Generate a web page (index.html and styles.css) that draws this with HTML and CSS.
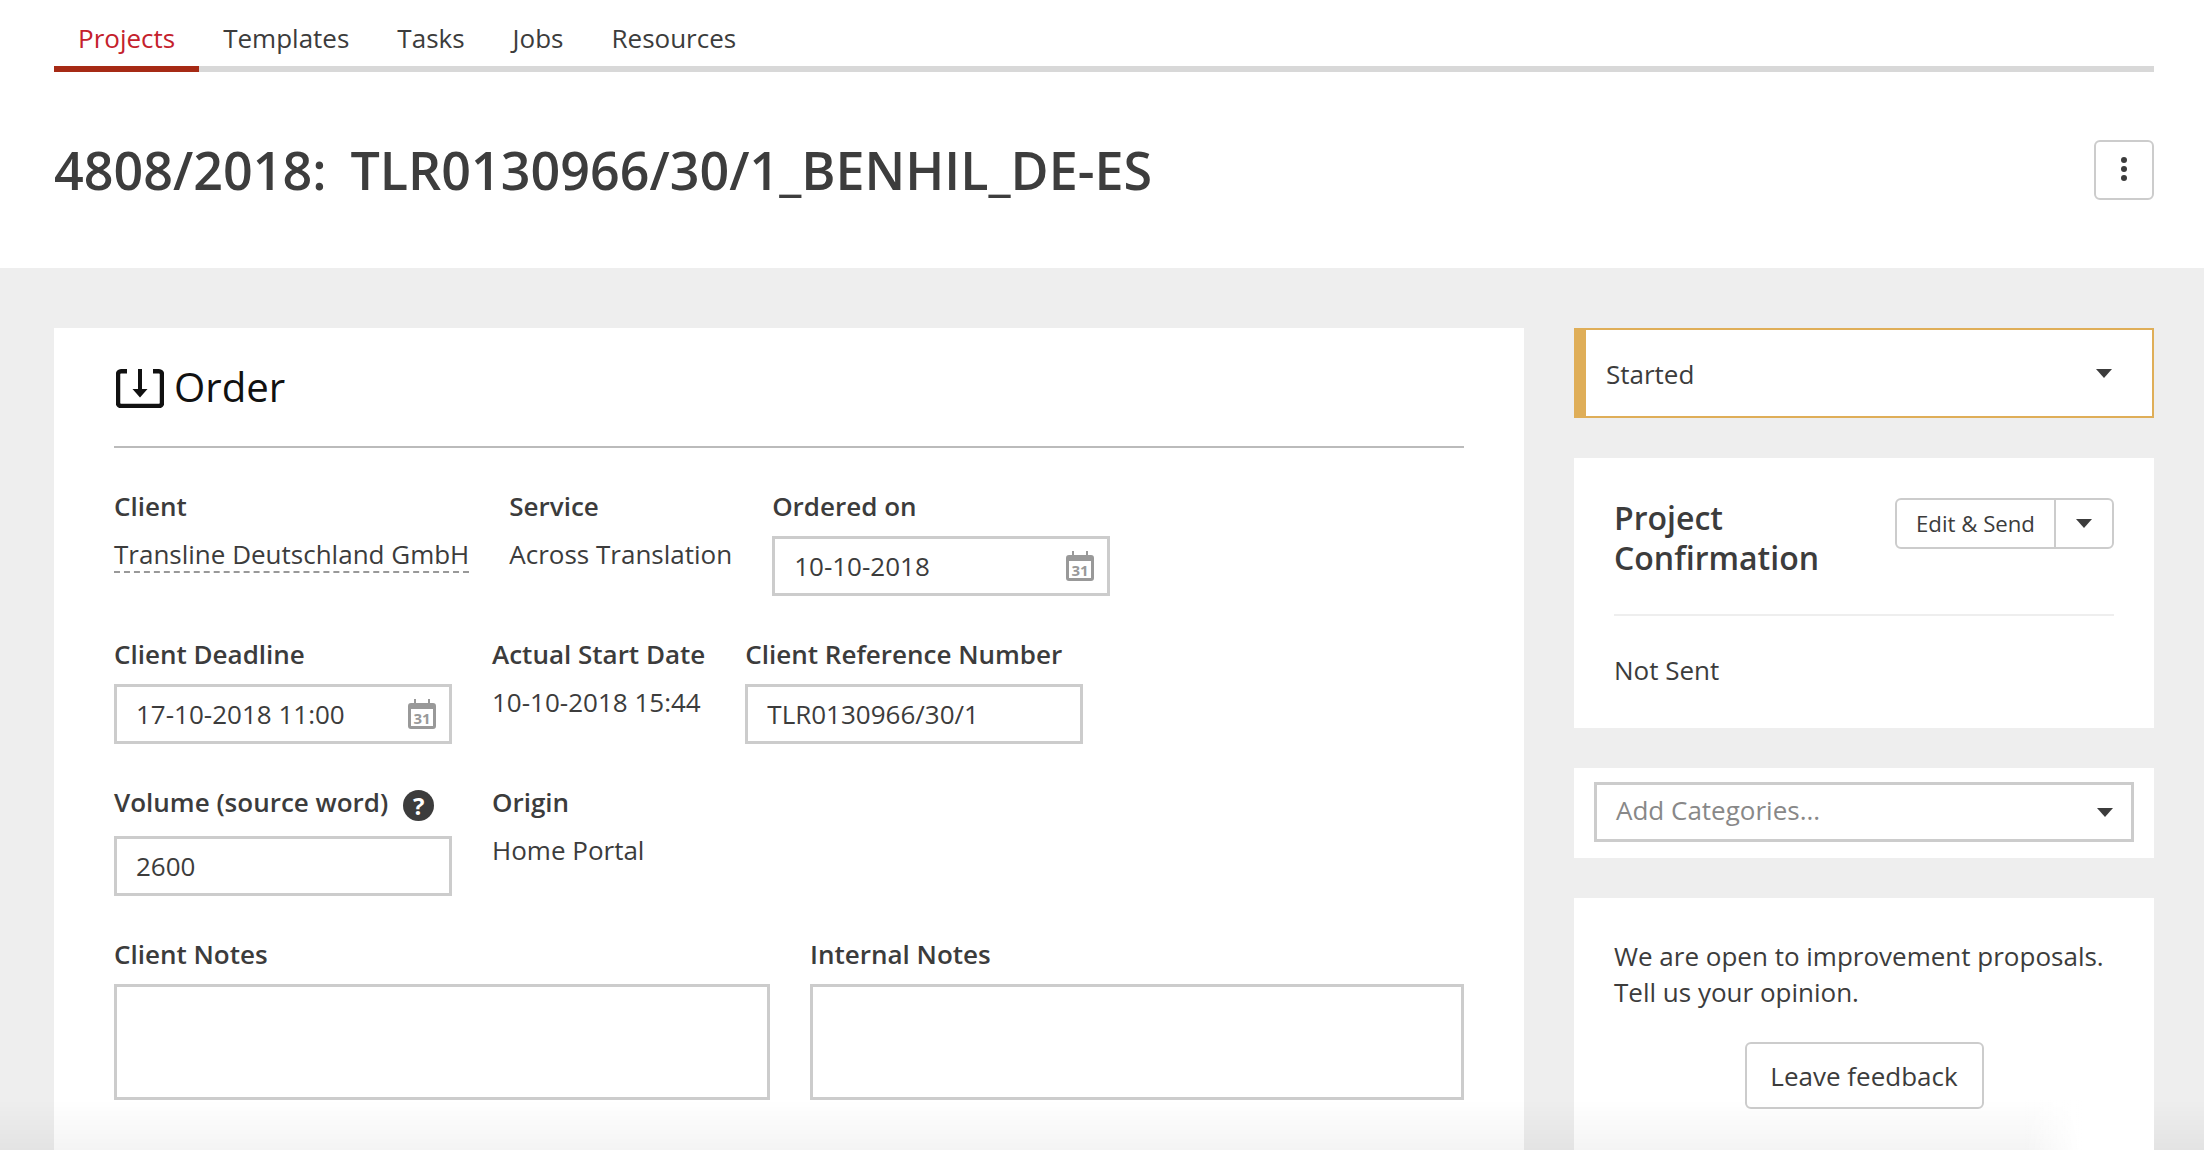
FILE: index.html
```html
<!DOCTYPE html>

<html>
  <head>
    <meta charset="utf-8" />
    <title>4808/2018: TLR0130966/30/1_BENHIL_DE-ES</title>
    <link rel="stylesheet" href="styles.css">
  </head>

  <body>
    <header class="top">
      <nav class="tabs">
        <a class="tab active">Projects</a>
        <a class="tab">Templates</a>
        <a class="tab">Tasks</a>
        <a class="tab">Jobs</a>
        <a class="tab">Resources</a>
      </nav>

      <div class="title-bar">
        <h1>4808/2018:&nbsp; TLR0130966/30/1_BENHIL_DE-ES</h1>
        <button class="kebab">
          <svg width="6" height="24" viewBox="0 0 6 24">
            <circle cx="3" cy="3" r="3" />
            <circle cx="3" cy="12" r="3" />
            <circle cx="3" cy="21" r="3" />
          </svg>
        </button>
      </div>
    </header>

    <main class="content">
      <section class="order">
        <div class="order-head">
          <svg class="order-icon" width="48" height="39" viewBox="0 0 48 39">
            <path d="M11 2.300H5a3 3 0 0 0-3 3V34a3 3 0 0 0 3 3h38a3 3 0 0 0 3-3V5.300a3 3 0 0 0-3-3h-6" fill="none" stroke="#111" stroke-width="4.500" />
            <path d="M22 0h4v20h5.500l-7.500 8.500-7.500-8.500H22z" fill="#111" />
          </svg>
          <h2>Order</h2>
        </div>

        <div class="row">
          <div class="field">
            <label>Client</label>
            <div class="value"><span class="dashed">Transline Deutschland GmbH</span></div>
          </div>
          <div class="field">
            <label>Service</label>
            <div class="value">Across Translation</div>
          </div>
          <div class="field">
            <label>Ordered on</label>
            <div class="date-input">
              <input class="input" value="10-10-2018" />
              <svg class="cal" width="28" height="30" viewBox="0 0 28 30">
                <path d="M6 0h2v4h12V0h2v4h3a3 3 0 0 1 3 3v20a3 3 0 0 1-3 3H3a3 3 0 0 1-3-3V7a3 3 0 0 1 3-3h3z" fill="#999" />
                <rect x="3" y="10" width="22" height="17" fill="#fff" />
                <text x="14" y="25" text-anchor="middle">31</text>
              </svg>
            </div>
          </div>
        </div>

        <div class="row">
          <div class="field">
            <label>Client Deadline</label>
            <div class="date-input">
              <input class="input" value="17-10-2018 11:00" />
              <svg class="cal" width="28" height="30" viewBox="0 0 28 30">
                <path d="M6 0h2v4h12V0h2v4h3a3 3 0 0 1 3 3v20a3 3 0 0 1-3 3H3a3 3 0 0 1-3-3V7a3 3 0 0 1 3-3h3z" fill="#999" />
                <rect x="3" y="10" width="22" height="17" fill="#fff" />
                <text x="14" y="25" text-anchor="middle">31</text>
              </svg>
            </div>
          </div>
          <div class="field">
            <label>Actual Start Date</label>
            <div class="value">10-10-2018 15:44</div>
          </div>
          <div class="field">
            <label>Client Reference Number</label>
            <input class="input" value="TLR0130966/30/1" />
          </div>
        </div>

        <div class="row">
          <div class="field">
            <label class="with-help">Volume (source word) <span class="help">?</span></label>
            <input class="input" value="2600" />
          </div>
          <div class="field">
            <label>Origin</label>
            <div class="value">Home Portal</div>
          </div>
        </div>

        <div class="row">
          <div class="field grow">
            <label>Client Notes</label>
            <textarea class="notes"></textarea>
          </div>
          <div class="field grow">
            <label>Internal Notes</label>
            <textarea class="notes"></textarea>
          </div>
        </div>
      </section>

      <aside class="side">
        <div class="status">
          <span>Started</span>
          <i class="caret"></i>
        </div>

        <div class="card confirm">
          <div class="confirm-head">
            <h3>Project<br />Confirmation</h3>
            <div class="split">
              <button class="split-main">Edit &amp; Send</button>
              <button class="split-arrow"><i class="caret"></i></button>
            </div>
          </div>
          <p class="confirm-state">Not Sent</p>
        </div>

        <div class="card categories">
          <div class="select">
            <span>Add Categories...</span>
            <i class="caret"></i>
          </div>
        </div>

        <div class="card feedback">
          <p>We are open to improvement proposals.<br />Tell us your opinion.</p>
          <button class="feedback-btn">Leave feedback</button>
        </div>
      </aside>
    </main>

    <!-- shadow at the bottom of the window -->
    <div class="fade"></div>
    <div class="fade-cut"></div>
  </body>
</html>
```

FILE: styles.css
```css
* {
  box-sizing: border-box;
}

html,
body {
  height: 100%;
}

body {
  margin: 0;
  overflow: hidden;
  display: flex;
  flex-direction: column;
  background: #eee;
  color: #3c3c3c;
  font-family: "Open Sans", "Noto Sans", sans-serif;
  font-size: 26px;
  line-height: 34px;
}

button,
input,
textarea {
  font: inherit;
  color: inherit;
  background: #fff;
}

/* Top area */
.top {
  background: #fff;
  padding: 0 50px 0 54px;
}

.tabs {
  display: flex;
  height: 72px;
  padding-top: 21px;
  border-bottom: 6px solid #d8d8d8;
}

.tab {
  height: 51px;
  padding: 0 24px;
  border-bottom: 6px solid transparent;
}

.tab.active {
  color: #c4212c;
  border-bottom-color: #a62a15;
}

.title-bar {
  display: flex;
  align-items: center;
  justify-content: space-between;
  height: 196px;
}

h1 {
  margin: 0;
  font-size: 52px;
  font-weight: 600;
  line-height: 60px;
  word-spacing: -1.500px;
  color: #3d3d3d;
}

.kebab {
  display: flex;
  align-items: center;
  justify-content: center;
  width: 60px;
  height: 60px;
  padding: 0;
  border: 2px solid #ccc;
  border-radius: 6px;
}

.kebab svg {
  margin-top: -3px;
  fill: #3c3c3c;
}

/* Main columns */
.content {
  flex: 1;
  display: flex;
  gap: 50px;
  padding: 60px 50px 0 54px;
}

.order {
  width: 1470px;
  padding: 41px 60px 0;
  background: #fff;
}

.order-head {
  display: flex;
  align-items: center;
  gap: 10px;
  height: 79px;
  padding-bottom: 38px;
  padding-left: 2px;
  border-bottom: 2px solid #bbb;
}

.order-icon {
  flex: none;
}

h2 {
  margin: 0 0 4px;
  font-size: 40.200px;
  font-weight: 400;
  line-height: 39px;
  color: #111;
}

.row {
  display: flex;
  gap: 40px;
  margin-top: 41px;
}

.field.grow {
  flex: 1 1 655px;
}

.field.grow:first-child {
  flex: 0 0 656px;
}

label {
  display: block;
  margin-bottom: 13px;
  font-weight: 600;
  white-space: nowrap;
}

.with-help {
  display: flex;
  align-items: flex-start;
  gap: 15px;
  height: 38px;
}

.help {
  display: block;
  width: 31px;
  height: 31px;
  margin-top: 5px;
  border-radius: 50%;
  background: #3c3c3c;
  color: #fff;
  font-size: 24px;
  font-weight: 700;
  line-height: 31px;
  text-align: center;
}

.value {
  margin-top: 14px;
  white-space: nowrap;
}

.dashed {
  display: inline-block;
  border-bottom: 2px dashed #999;
}

.input {
  display: block;
  width: 338px;
  height: 60px;
  padding: 0 19px;
  border: 3px solid #ccc;
  border-radius: 0;
  outline: none;
}

.date-input {
  position: relative;
}

.cal {
  position: absolute;
  top: 15px;
  right: 16px;
}

.cal text {
  font-family: "Open Sans", sans-serif;
  font-size: 15px;
  font-weight: 700;
  fill: #999;
}

.notes {
  display: block;
  width: 100%;
  height: 116px;
  border: 3px solid #ccc;
  border-radius: 0;
  resize: none;
}

/* Right column */
.side {
  width: 580px;
  display: flex;
  flex-direction: column;
  gap: 40px;
}

.card {
  background: #fff;
}

.status {
  display: flex;
  align-items: center;
  justify-content: space-between;
  height: 90px;
  padding: 2px 40px 0 20px;
  background: #fff;
  border: 2px solid #dfae58;
  border-left-width: 12px;
}

.caret {
  display: block;
  width: 0;
  height: 0;
  border-top: 9px solid #3c3c3c;
  border-left: 8.500px solid transparent;
  border-right: 8.500px solid transparent;
}

.status .caret {
  margin-top: -2px;
}

.confirm {
  height: 270px;
  padding: 40px;
}

.confirm-head {
  display: flex;
  align-items: flex-start;
  justify-content: space-between;
  height: 118px;
  border-bottom: 2px solid #eee;
}

h3 {
  margin: 0;
  font-size: 32px;
  font-weight: 600;
  line-height: 40px;
}

.split {
  display: flex;
  height: 51px;
  border: 2px solid #ccc;
  border-radius: 6px;
  font-size: 22.200px;
}

.split button {
  padding: 0;
  border: 0;
  background: none;
}

.split-main {
  width: 159px;
  border-right: 2px solid #ccc !important;
}

.split-arrow {
  display: flex;
  align-items: center;
  justify-content: center;
  width: 56px;
}

.confirm-state {
  margin: 37px 0 0;
}

.categories {
  height: 90px;
  padding: 14px 20px;
}

.select {
  display: flex;
  align-items: center;
  justify-content: space-between;
  height: 60px;
  padding: 0 18px 0 19px;
  border: 3px solid #ccc;
  color: #888;
}

.select span {
  margin-bottom: 4px;
}

.feedback {
  flex: 1;
  padding: 40px 40px 0;
  text-align: center;
}

.feedback p {
  margin: 0 0 32px;
  line-height: 36px;
  text-align: left;
  white-space: nowrap;
}

.feedback-btn {
  width: 239px;
  height: 67px;
  padding: 0;
  border: 2px solid #ccc;
  border-radius: 6px;
}

/* Bottom shadow */
.fade {
  position: fixed;
  left: 0;
  right: 0;
  bottom: 0;
  height: 50px;
  background: linear-gradient(rgba(0, 0, 0, 0), rgba(0, 0, 0, 0.045));
}

.fade-cut {
  position: fixed;
  right: 50px;
  bottom: 0;
  width: 130px;
  height: 50px;
  background: linear-gradient(to right, rgba(255, 255, 255, 0), #fff 45%);
}
```
